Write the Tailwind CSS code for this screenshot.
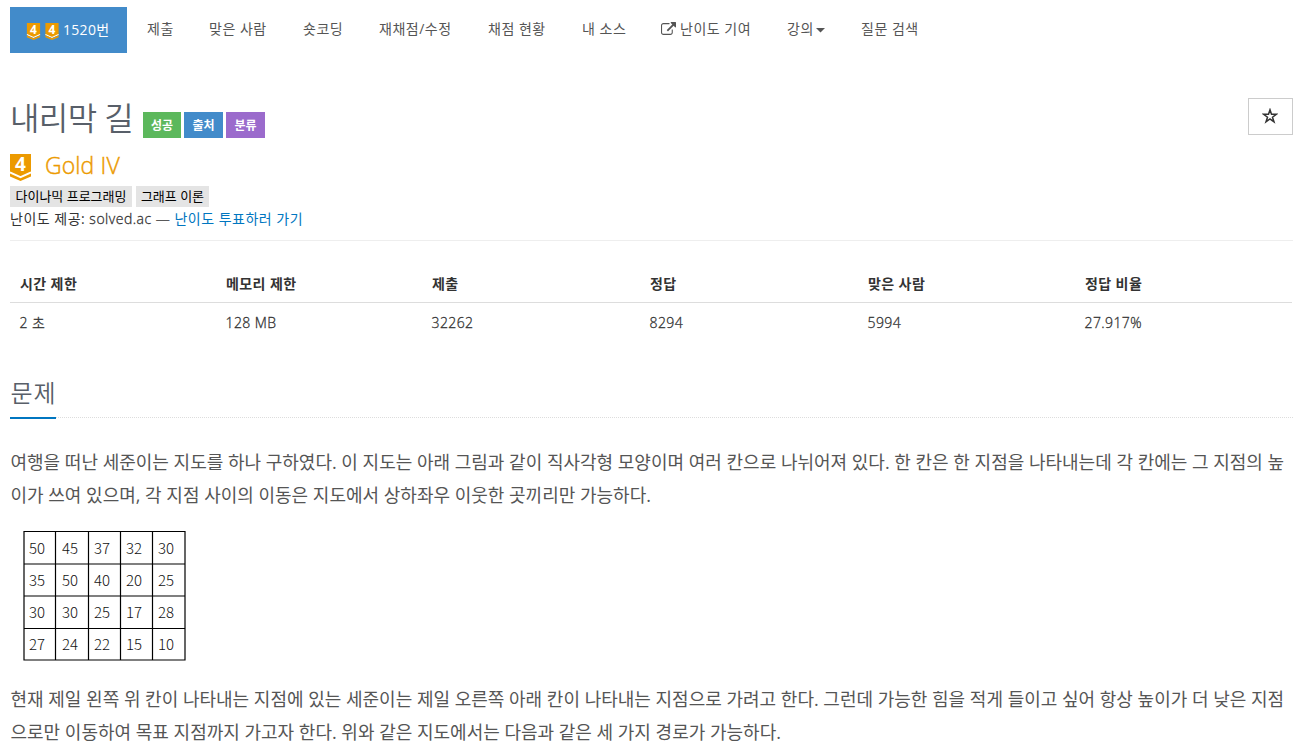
<!DOCTYPE html>
<html lang="ko">
<head>
<meta charset="utf-8">
<title>1520번: 내리막 길</title>
<script src="https://cdn.jsdelivr.net/npm/@tailwindcss/browser@4"></script>
</head>
<body class="h-[749px] overflow-hidden bg-white pl-[10px] pr-4 pt-[7px] font-['Open_Sans','Noto_Sans_CJK_KR',sans-serif] text-sm text-[#333]">
<svg class="hidden">
  <symbol id="tier" viewBox="0 0 21 27">
    <path fill="#ec9a00" d="M0 0h21v18.500L10.500 23 0 18.500z"/>
    <path fill="none" stroke="#fff" stroke-width="1.600" d="M0 18.200l10.500 4.700L21 18.200"/>
    <path fill="#ec9a00" d="M0 19.500l10.500 4.700L21 19.500v3L10.500 27 0 22.500z"/>
    <text x="10.500" y="17" text-anchor="middle" font-family="Open Sans" font-weight="700" font-size="19" fill="#fff">4</text>
  </symbol>
</svg>
<nav class="flex h-[46px] whitespace-nowrap leading-[43px] tracking-[0.5px] text-[#555]">
  <a class="mr-5 flex w-[117px] items-center bg-[#428bca] pl-[16px] text-white">
    <svg class="mt-[2px] h-[17px] w-[15px] tracking-normal"><use href="#tier"/></svg>
    <svg class="ml-[4px] mt-[2px] h-[17px] w-[14px] tracking-normal"><use href="#tier"/></svg>
    <span class="-mt-[2px] ml-[4px] tracking-[0.3px]">1520번</span>
  </a>
  <a class="w-[62px]">제출</a>
  <a class="w-[94px]">맞은 사람</a>
  <a class="w-[76px]">숏코딩</a>
  <a class="w-[109px]">재채점/수정</a>
  <a class="w-[94px]">채점 현황</a>
  <a class="w-[79px]">내 소스</a>
  <a class="flex h-[43px] w-[126px] items-center"><svg class="mr-[4px] h-[14px] w-[15px]" viewBox="0 0 1792 1664" fill="#555"><path d="M1408 928v320q0 119-84.500 203.500T1120 1536H288q-119 0-203.500-84.500T0 1248V416q0-119 84.500-203.500T288 128h704q14 0 23 9t9 23v64q0 14-9 23t-23 9H288q-66 0-113 47t-47 113v832q0 66 47 113t113 47h832q66 0 113-47t47-113V928q0-14 9-23t23-9h64q14 0 23 9t9 23zm384-864v512q0 26-19 45t-45 19-45-19l-176-176-652 652q-10 10-23 10t-23-10L695 983q-10-10-10-23t10-23l652-652-176-176q-19-19-19-45t19-45 45-19h512q26 0 45 19t19 45z"/></svg>난이도 기여</a>
  <a class="flex h-[43px] w-[74px] items-center">강의<svg class="ml-[2px] mt-[4px] h-[4.500px] w-[9px]" viewBox="0 0 8 4" fill="#555"><path d="M0 0h8L4 4z"/></svg></a>
  <a>질문 검색</a>
</nav>
<header class="flex h-[96px] items-start justify-between pt-[45px]">
  <div class="flex">
    <h1 class="w-[133px] whitespace-nowrap text-[32px] leading-[40px] font-[350] tracking-[-0.6px] text-[#585f69]">내리막 길</h1>
    <div class="mt-[14px] flex gap-[3px] text-center text-[12px] leading-[27px] font-bold text-white">
      <span class="h-[26px] w-[38px] bg-[#5cb85c]">성공</span>
      <span class="h-[26px] w-[39px] bg-[#428bca]">출처</span>
      <span class="h-[26px] w-[39px] bg-[#9b6bcc]">분류</span>
    </div>
  </div>
  <button class="flex h-[37px] w-[45px] items-center justify-center border border-[#ccc] pr-[2px]">
    <svg class="-mt-px h-[16px] w-[16px]" viewBox="0 0 16 16" fill="none" stroke="#333" stroke-width="1.500"><path d="M8 1.800l1.500 4.500h4.900l-3.900 2.900 1.500 4.700-4-2.900-4 2.900 1.500-4.700-3.900-2.900h4.900z"/></svg>
  </button>
</header>
<section class="h-[92px] border-b border-[#eee]">
  <div class="flex h-[37px] pt-[5px]">
    <svg class="h-[27px] w-[21px]"><use href="#tier"/></svg>
    <span class="ml-[14px] -mt-[2px] text-[23px] leading-[26px] font-light tracking-[0.1px] text-[#ec9a00] [-webkit-text-stroke:0.400px_#ec9a00]">Gold IV</span>
  </div>
  <div class="flex gap-1 text-center text-[13px] leading-[20px] whitespace-nowrap text-black">
    <span class="h-[21px] w-[122px] bg-[#e4e4e4]">다이나믹 프로그래밍</span>
    <span class="h-[21px] w-[73px] bg-[#e4e4e4]">그래프 이론</span>
  </div>
  <p class="leading-[23px] font-light tracking-[0.5px]"><span class="font-normal">난이도 제공:</span> <span class="[-webkit-text-stroke:0.300px_#333]">solved.ac —</span> <a class="font-normal text-[#0076c0]">난이도 투표하러 가기</a></p>
</section>
<div class="mt-[23px] w-[1282px]">
  <div class="grid h-[39px] grid-cols-[206px_206px_218px_218px_217px_1fr] border-b border-[#ddd] pl-[10px] leading-[39px] font-bold tracking-[0.4px]">
    <span>시간 제한</span><span>메모리 제한</span><span>제출</span><span>정답</span><span>맞은 사람</span><span>정답 비율</span>
  </div>
  <div class="grid h-[39px] grid-cols-[206px_206px_218px_218px_217px_1fr] pl-[9.500px] leading-[39px] font-light tracking-[0.4px] [-webkit-text-stroke:0.300px_#333]">
    <span>2 초</span><span>128 MB</span><span>32262</span><span>8294</span><span>5994</span><span>27.917%</span>
  </div>
</div>
<div class="mt-[30px] h-[46px] border-b border-dotted border-[#ddd]">
  <h2 class="h-[47px] w-[46px] whitespace-nowrap border-b-2 border-[#0076c0] pl-[0.500px] text-[24px] leading-[42px] font-[350] tracking-[0.8px] text-[#585f69]">문제</h2>
</div>
<main class="pl-[0.500px] text-[18px] leading-[33px] whitespace-nowrap text-[#555]">
  <p class="mt-[28px]">여행을 떠난 세준이는 지도를 하나 구하였다. 이 지도는 아래 그림과 같이 직사각형 모양이며 여러 칸으로 나뉘어져 있다. 한 칸은 한 지점을 나타내는데 각 칸에는 그 지점의 높<br>이가 쓰여 있으며, 각 지점 사이의 이동은 지도에서 상하좌우 이웃한 곳끼리만 가능하다.</p>
  <svg class="mt-[13px] ml-[12.500px] block h-[140px] w-[170px]" viewBox="0 0 170 140">
    <path d="M1 6.500h161v128.500H1zM1 39h161M1 71h161M1 103.500h161M32.500 6.500v129M65.500 6.500v129M97.500 6.500v129M129.500 6.500v129" fill="none" stroke="#000" stroke-width="1.200"/>
    <g font-family="Noto Sans CJK KR" font-weight="300" font-size="15" fill="#111">
      <text x="6" y="28.500" textLength="16">50</text><text x="39" y="28.500" textLength="16">45</text><text x="71" y="28.500" textLength="16">37</text><text x="103" y="28.500" textLength="16">32</text><text x="135" y="28.500" textLength="16">30</text>
      <text x="6" y="61" textLength="16">35</text><text x="39" y="61" textLength="16">50</text><text x="71" y="61" textLength="16">40</text><text x="103" y="61" textLength="16">20</text><text x="135" y="61" textLength="16">25</text>
      <text x="6" y="92.500" textLength="16">30</text><text x="39" y="92.500" textLength="16">30</text><text x="71" y="92.500" textLength="16">25</text><text x="103" y="92.500" textLength="16">17</text><text x="135" y="92.500" textLength="16">28</text>
      <text x="6" y="124.500" textLength="16">27</text><text x="39" y="124.500" textLength="16">24</text><text x="71" y="124.500" textLength="16">22</text><text x="103" y="124.500" textLength="16">15</text><text x="135" y="124.500" textLength="16">10</text>
    </g>
  </svg>
  <p class="mt-[18px]">현재 제일 왼쪽 위 칸이 나타내는 지점에 있는 세준이는 제일 오른쪽 아래 칸이 나타내는 지점으로 가려고 한다. 그런데 가능한 힘을 적게 들이고 싶어 항상 높이가 더 낮은 지점<br>으로만 이동하여 목표 지점까지 가고자 한다. 위와 같은 지도에서는 다음과 같은 세 가지 경로가 가능하다.</p>
</main>
</body>
</html>
